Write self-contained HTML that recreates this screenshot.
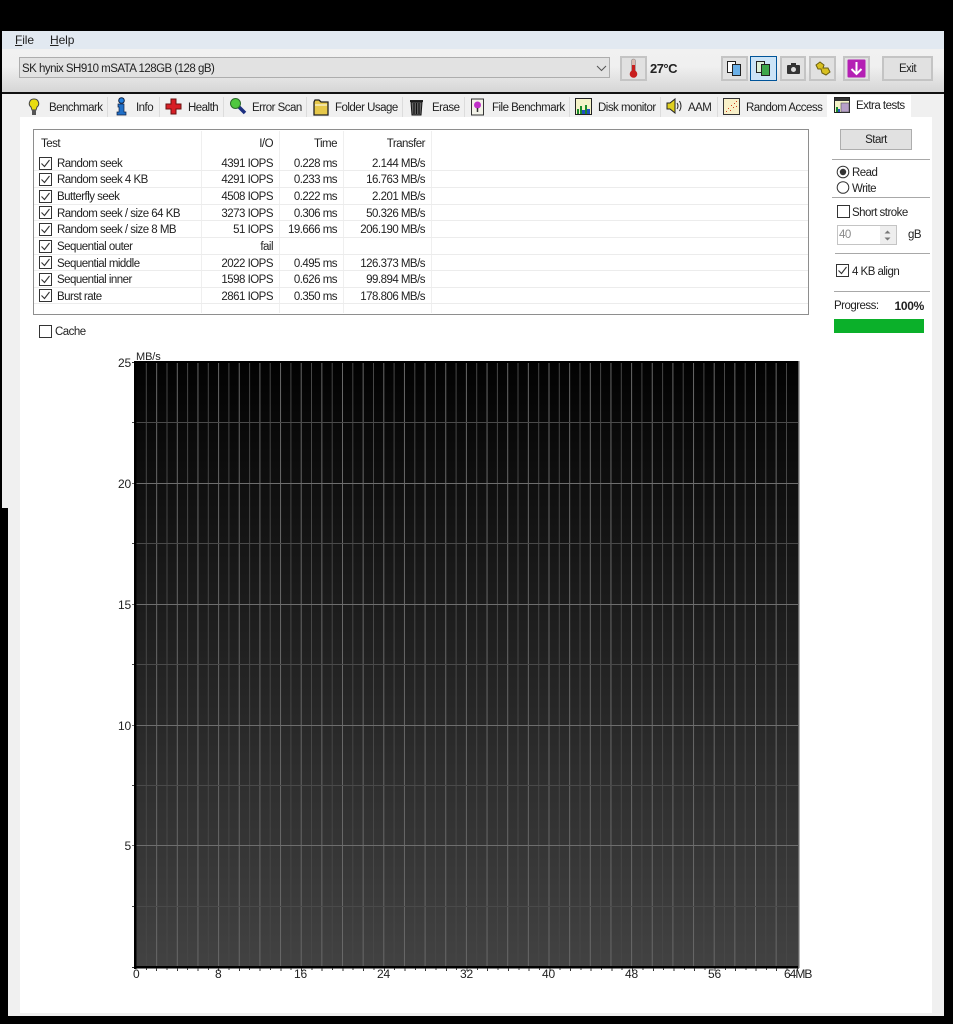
<!DOCTYPE html>
<html><head><meta charset="utf-8"><style>
html,body{margin:0;padding:0;background:#000;width:953px;height:1024px;overflow:hidden}
body{position:relative;font:11.5px "Liberation Sans",sans-serif;color:#222;letter-spacing:-.52px}
div,span,svg{position:absolute;white-space:nowrap}
.b{box-sizing:border-box;border:2px solid #c4c4c4;background:#e1e1e1}
.sep{height:1px;background:#a8a8a8}
.tab{top:101px;line-height:15px}
.tsep{top:97px;width:1px;height:20px;background:#dcdcdc}
.t{line-height:14px;margin-top:1px}
.r{text-align:right}
.h{height:1px;left:34px;width:774px;background:#ececec}
.v{width:1px;top:131px;height:182px;background:#efefef}
.l{font-size:12px;line-height:14px;letter-spacing:-.15px}
</style></head><body>
<svg width="0" height="0" style="position:absolute"><defs>
<g id="cb"><rect x=".5" y=".5" width="12" height="12" fill="#fff" stroke="#333"/><path d="M2.500 6.500l3 3 5-6.500" fill="none" stroke="#333" stroke-width="1.100"/></g>
<g id="cu"><rect x=".5" y=".5" width="12" height="12" fill="#fff" stroke="#333"/></g>
</defs></svg>

<!-- window -->
<div style="left:2px;top:31px;width:942px;height:18px;background:#e2e9f1"></div>
<div style="left:2px;top:49px;width:942px;height:43px;background:linear-gradient(#f1f1f1,#f0f0f0 40%,#d6d6d6)"></div>
<div style="left:2px;top:92px;width:942px;height:2px;background:#111"></div>
<div style="left:2px;top:94px;width:942px;height:414px;background:#f0f0f0"></div>
<div style="left:8px;top:508px;width:936px;height:508px;background:#f0f0f0"></div>
<div style="left:20px;top:117px;width:912px;height:896px;background:#fff"></div>

<!-- menu -->
<div class="t" style="left:15px;top:32px;font-size:12px;letter-spacing:-.1px"><u>F</u>ile</div>
<div class="t" style="left:50px;top:32px;font-size:12px;letter-spacing:-.1px"><u>H</u>elp</div>

<!-- toolbar -->
<div style="box-sizing:border-box;left:19px;top:57px;width:591px;height:21px;background:#e2e2e2;border:1px solid #adadad"></div>
<div class="t" style="left:22px;top:61px">SK hynix SH910 mSATA 128GB (128 gB)</div>
<svg style="left:596px;top:65px" width="11" height="7"><path d="M1 1l4.500 4.500L10 1" fill="none" stroke="#555"/></svg>

<div class="b" style="left:620px;top:56px;width:27px;height:25px"></div>
<svg style="left:627px;top:58px" width="14" height="21"><rect x="4.500" y="1" width="4" height="14" rx="2" fill="#d9b9b0" stroke="#888" stroke-width=".6"/><rect x="5" y="7" width="3" height="8" fill="#c81e1e"/><circle cx="6.500" cy="16" r="3.800" fill="#c81e1e"/></svg>
<div style="left:650px;top:62px;font-weight:bold;font-size:13px;line-height:14px;color:#222">27°C</div>

<div class="b" style="left:721px;top:56px;width:27px;height:25px"></div>
<svg style="left:726px;top:60px" width="17" height="17"><rect x="1.500" y="1.500" width="8" height="11" fill="#fff" stroke="#222"/><rect x="6.500" y="4.500" width="8" height="11" fill="#6ab0e8" stroke="#222"/></svg>
<div style="box-sizing:border-box;left:750px;top:56px;width:27px;height:25px;background:#cce4f7;border:1px solid #005499"></div>
<svg style="left:755px;top:60px" width="17" height="17"><rect x="1.500" y="1.500" width="8" height="11" fill="#dff0d8" stroke="#222"/><rect x="6.500" y="4.500" width="8" height="11" fill="#3da64a" stroke="#222"/></svg>
<div class="b" style="left:780px;top:56px;width:26px;height:25px"></div>
<svg style="left:786px;top:62px" width="15" height="13"><rect x="1" y="3" width="13" height="9" rx="1" fill="#333"/><rect x="5" y="1" width="5" height="3" fill="#333"/><circle cx="7.500" cy="7.500" r="2.500" fill="#ddd"/></svg>
<div class="b" style="left:809px;top:56px;width:27px;height:25px"></div>
<svg style="left:814px;top:60px" width="18" height="17"><path d="M2 5l4-3 4 3-1 3 5 0 2 4-4 3-4-2-1-4-3 0z" fill="#d8c020" stroke="#6a5e10"/></svg>
<div class="b" style="left:843px;top:56px;width:27px;height:25px"></div>
<svg style="left:847px;top:59px" width="19" height="19"><rect x=".5" y=".5" width="18" height="18" rx="1" fill="#b41fb4"/><path d="M9.500 3v12M4.500 10l5 5 5-5" fill="none" stroke="#fff" stroke-width="2"/></svg>
<div class="b" style="left:882px;top:56px;width:51px;height:25px"></div>
<div class="t" style="left:882px;top:61px;width:51px;text-align:center">Exit</div>

<!-- tabs -->
<div style="left:21px;top:97px;width:806px;height:20px;background:#f0f0f0"></div>
<div class="tsep" style="left:107px"></div><div class="tsep" style="left:159px"></div><div class="tsep" style="left:223px"></div><div class="tsep" style="left:306px"></div><div class="tsep" style="left:402px"></div><div class="tsep" style="left:464px"></div><div class="tsep" style="left:569px"></div><div class="tsep" style="left:660px"></div><div class="tsep" style="left:717px"></div>
<div style="left:827px;top:95px;width:84px;height:22px;background:#fff"></div>

<svg style="left:28px;top:98px" width="12" height="19"><path d="M6 1a4.500 4.500 0 0 0-3 8l1 3h4l1-3a4.500 4.500 0 0 0-3-8z" fill="#e8dc10" stroke="#444"/><rect x="4" y="12" width="4" height="5" fill="#555"/></svg>
<div class="tab" style="left:49px">Benchmark</div>
<svg style="left:115px;top:97px" width="13" height="20"><circle cx="6.500" cy="3.500" r="2.800" fill="#2080e0" stroke="#124"/><path d="M3 7h6v8h2v3H2v-3h2V10H3z" fill="#2070c8" stroke="#124" stroke-width=".7"/></svg>
<div class="tab" style="left:136px">Info</div>
<svg style="left:165px;top:98px" width="17" height="17"><path d="M6 1h5v5h5v5h-5v5H6v-5H1V6h5z" fill="#d81f26" stroke="#6a1010"/></svg>
<div class="tab" style="left:188px">Health</div>
<svg style="left:229px;top:97px" width="18" height="18"><path d="M9 9l7 7" stroke="#1c2f80" stroke-width="3.500"/><circle cx="6.500" cy="6.500" r="5" fill="#4fc83f" stroke="#2b6a2b"/></svg>
<div class="tab" style="left:252px">Error Scan</div>
<svg style="left:313px;top:99px" width="16" height="17"><path d="M1 3l1-2h4l2 2h7v13H1z" fill="#e6c84a" stroke="#222" stroke-width="1.300"/><path d="M2 6h12" stroke="#fff"/></svg>
<div class="tab" style="left:335px">Folder Usage</div>
<svg style="left:409px;top:98px" width="15" height="18"><path d="M1 2h13v2H1z" fill="#222"/><path d="M2 4h11l-1 13H3z" fill="#666" stroke="#111"/><path d="M5 5v11M7.500 5v11M10 5v11" stroke="#111" stroke-width="1.200"/></svg>
<div class="tab" style="left:432px">Erase</div>
<svg style="left:470px;top:98px" width="15" height="18"><path d="M1.500 1h12v16h-12z" fill="#f2f2e8" stroke="#333"/><circle cx="7.500" cy="7" r="3.500" fill="#c030c8"/><path d="M7.500 10v4" stroke="#333" stroke-width="1.500"/></svg>
<div class="tab" style="left:492px">File Benchmark</div>
<svg style="left:575px;top:98px" width="17" height="17"><rect x=".5" y=".5" width="16" height="16" fill="#f4f2c8" stroke="#222"/><path d="M2 16v-5h2v5zM5 16V8h2v8zM10 16v-9h2v9z" fill="#1a8a2a"/><path d="M7 16v-4h3v4zM12 16v-5h3v5z" fill="#2050c0"/></svg>
<div class="tab" style="left:598px">Disk monitor</div>
<svg style="left:666px;top:98px" width="17" height="16"><path d="M1 5h3l5-4v14l-5-4H1z" fill="#e0d020" stroke="#222"/><path d="M11 5q2 3 0 6M13.500 3q3 5 0 10" fill="none" stroke="#222"/></svg>
<div class="tab" style="left:688px">AAM</div>
<svg style="left:723px;top:98px" width="17" height="17"><rect x=".5" y=".5" width="16" height="16" fill="#f8f0c8" stroke="#333"/><path d="M3 13h1v1H3zM5 10h1v1H5zM7 12h1v1H7zM8 7h1v1H8zM10 9h1v1h-1zM11 5h1v1h-1zM13 8h1v1h-1zM13 3h1v1h-1z" fill="#d04020"/></svg>
<div class="tab" style="left:746px">Random Access</div>
<svg style="left:834px;top:97px" width="16" height="16"><rect x=".5" y=".5" width="15" height="15" fill="#f4f2c8" stroke="#222"/><rect x="1" y="1" width="14" height="3" fill="#333"/><path d="M2 15v-5h2v5z" fill="#1a8a2a"/><path d="M4 15v-3h2v3z" fill="#2050c0"/><rect x="7" y="6" width="8" height="9" fill="#b8a0c8" stroke="#555" stroke-width=".6"/></svg>
<div class="tab" style="left:856px;top:99px">Extra tests</div>

<!-- table -->
<div style="box-sizing:border-box;left:33px;top:129px;width:776px;height:186px;border:1px solid #8e8e8e;background:#fff"></div>
<div class="v" style="left:201px"></div><div class="v" style="left:279px"></div><div class="v" style="left:343px"></div><div class="v" style="left:431px"></div>
<div class="h" style="top:170px"></div><div class="h" style="top:187px"></div><div class="h" style="top:204px"></div><div class="h" style="top:220px"></div><div class="h" style="top:237px"></div><div class="h" style="top:254px"></div><div class="h" style="top:270px"></div><div class="h" style="top:287px"></div><div class="h" style="top:303px"></div>
<div class="t" style="left:41px;top:136px">Test</div>
<div class="t r" style="right:680px;top:136px">I/O</div>
<div class="t r" style="right:616px;top:136px">Time</div>
<div class="t r" style="right:528px;top:136px">Transfer</div>

<svg style="left:39px;top:157px" width="13" height="13"><use href="#cb"/></svg><div class="t" style="left:57px;top:156px">Random seek</div><div class="t r" style="right:680px;top:156px">4391 IOPS</div><div class="t r" style="right:616px;top:156px">0.228 ms</div><div class="t r" style="right:528px;top:156px">2.144 MB/s</div>
<svg style="left:39px;top:173px" width="13" height="13"><use href="#cb"/></svg><div class="t" style="left:57px;top:172px">Random seek 4 KB</div><div class="t r" style="right:680px;top:172px">4291 IOPS</div><div class="t r" style="right:616px;top:172px">0.233 ms</div><div class="t r" style="right:528px;top:172px">16.763 MB/s</div>
<svg style="left:39px;top:190px" width="13" height="13"><use href="#cb"/></svg><div class="t" style="left:57px;top:189px">Butterfly seek</div><div class="t r" style="right:680px;top:189px">4508 IOPS</div><div class="t r" style="right:616px;top:189px">0.222 ms</div><div class="t r" style="right:528px;top:189px">2.201 MB/s</div>
<svg style="left:39px;top:206px" width="13" height="13"><use href="#cb"/></svg><div class="t" style="left:57px;top:206px">Random seek / size 64 KB</div><div class="t r" style="right:680px;top:206px">3273 IOPS</div><div class="t r" style="right:616px;top:206px">0.306 ms</div><div class="t r" style="right:528px;top:206px">50.326 MB/s</div>
<svg style="left:39px;top:223px" width="13" height="13"><use href="#cb"/></svg><div class="t" style="left:57px;top:222px">Random seek / size 8 MB</div><div class="t r" style="right:680px;top:222px">51 IOPS</div><div class="t r" style="right:616px;top:222px">19.666 ms</div><div class="t r" style="right:528px;top:222px">206.190 MB/s</div>
<svg style="left:39px;top:240px" width="13" height="13"><use href="#cb"/></svg><div class="t" style="left:57px;top:239px">Sequential outer</div><div class="t r" style="right:680px;top:239px">fail</div>
<svg style="left:39px;top:256px" width="13" height="13"><use href="#cb"/></svg><div class="t" style="left:57px;top:256px">Sequential middle</div><div class="t r" style="right:680px;top:256px">2022 IOPS</div><div class="t r" style="right:616px;top:256px">0.495 ms</div><div class="t r" style="right:528px;top:256px">126.373 MB/s</div>
<svg style="left:39px;top:273px" width="13" height="13"><use href="#cb"/></svg><div class="t" style="left:57px;top:272px">Sequential inner</div><div class="t r" style="right:680px;top:272px">1598 IOPS</div><div class="t r" style="right:616px;top:272px">0.626 ms</div><div class="t r" style="right:528px;top:272px">99.894 MB/s</div>
<svg style="left:39px;top:289px" width="13" height="13"><use href="#cb"/></svg><div class="t" style="left:57px;top:289px">Burst rate</div><div class="t r" style="right:680px;top:289px">2861 IOPS</div><div class="t r" style="right:616px;top:289px">0.350 ms</div><div class="t r" style="right:528px;top:289px">178.806 MB/s</div>

<svg style="left:39px;top:325px" width="13" height="13"><use href="#cu"/></svg><div class="t" style="left:55px;top:324px">Cache</div>

<!-- right column -->
<div class="b" style="left:840px;top:129px;width:72px;height:21px;border-width:1px;border-color:#adadad"></div>
<div class="t" style="left:840px;top:132px;width:72px;text-align:center">Start</div>
<div class="sep" style="left:832px;top:159px;width:98px"></div>
<svg style="left:836px;top:165px" width="14" height="29"><circle cx="7" cy="7" r="5.800" fill="#fff" stroke="#333"/><circle cx="7" cy="7" r="3.200" fill="#333"/><circle cx="7" cy="22.500" r="5.800" fill="#fff" stroke="#333"/></svg>
<div class="t" style="left:852px;top:165px">Read</div>
<div class="t" style="left:852px;top:181px">Write</div>
<div class="sep" style="left:832px;top:197px;width:98px"></div>
<svg style="left:837px;top:205px" width="13" height="13"><use href="#cu"/></svg>
<div class="t" style="left:852px;top:205px">Short stroke</div>
<div style="box-sizing:border-box;left:837px;top:225px;width:60px;height:20px;background:#fff;border:1px solid #c4c4c4"></div>
<div style="left:880px;top:226px;width:16px;height:18px;background:#eee"></div>
<svg style="left:883px;top:229px" width="9" height="13"><path d="M1.500 4.500L4.500 1.500 7.500 4.500zM1.500 8.500L4.500 11.500 7.500 8.500z" fill="#777"/></svg>
<div class="t" style="left:839px;top:227px;color:#8a8a8a">40</div>
<div class="t" style="left:908px;top:227px">gB</div>
<div class="sep" style="left:835px;top:253px;width:95px"></div>
<svg style="left:836px;top:264px" width="13" height="13"><use href="#cb"/></svg>
<div class="t" style="left:852px;top:264px">4 KB align</div>
<div class="sep" style="left:834px;top:291px;width:96px"></div>
<div class="t" style="left:834px;top:298px">Progress:</div>
<div class="t" style="right:29px;top:298px;font-weight:bold;font-size:12px;letter-spacing:-.3px">100%</div>
<div style="left:834px;top:319px;width:90px;height:14px;background:#0bb02a"></div>

<!-- graph -->
<svg style="left:130px;top:355px" width="675px" height="620" viewBox="130 355 675 620">
<defs>
<linearGradient id="g" x1="0" y1="0" x2="0" y2="1"><stop offset="0" stop-color="#020202"/><stop offset="1" stop-color="#424242"/></linearGradient>
</defs>
<rect x="135" y="361" width="664" height="606" fill="url(#g)"/>
<path d="M146.300 363v603M167 363v603M187.600 363v603M208.300 363v603M228.900 363v603M249.600 363v603M270.200 363v603M290.900 363v603M311.500 363v603M332.200 363v603M352.800 363v603M373.500 363v603M394.100 363v603M414.800 363v603M435.400 363v603M456.100 363v603M476.700 363v603M497.400 363v603M518 363v603M538.700 363v603M559.300 363v603M580 363v603M600.600 363v603M621.300 363v603M641.900 363v603M662.600 363v603M683.200 363v603M703.900 363v603M724.500 363v603M745.200 363v603M765.800 363v603M786.500 363v603" stroke="#474747" fill="none"/>
<path d="M156.650 363v603M177.300 363v603M197.950 363v603M218.600 363v603M239.250 363v603M259.900 363v603M280.550 363v603M301.200 363v603M321.850 363v603M342.500 363v603M363.150 363v603M383.800 363v603M404.450 363v603M425.100 363v603M445.750 363v603M466.400 363v603M487.050 363v603M507.700 363v603M528.350 363v603M549 363v603M569.650 363v603M590.300 363v603M610.950 363v603M631.600 363v603M652.250 363v603M672.900 363v603M693.550 363v603M714.200 363v603M734.850 363v603M755.500 363v603M776.150 363v603" stroke="#686868" fill="none"/>
<path d="M132 422.500H798M132 543.500H798M132 664.500H798M132 785.500H798M132 906.500H798" stroke="#4a4a4a"/>
<path d="M132 483.500H798M132 604.500H798M132 725.500H798M132 845.500H798" stroke="#6e6e6e"/>
<path d="M132 362.500H136M132 967.500H136" stroke="#333"/>
<rect x="134" y="361" width="665" height="2" fill="#000"/>
<rect x="134" y="361" width="2.500" height="608" fill="#000"/>
<rect x="134" y="966" width="665" height="2.500" fill="#000"/>
<rect x="798" y="361" width="1.500" height="607" fill="#666"/>
<path d="M146.500 968v2M156.500 968v3M167 968v2M177.500 968v3M187.500 968v2M198 968v3M208.500 968v2M218.500 968v3M229 968v2M239.500 968v3M249.500 968v2M260 968v3M270.500 968v2M281 968v3M291 968v2M301.500 968v3M312 968v2M322 968v3M332.500 968v2M343 968v3M353 968v2M363.500 968v3M374 968v2M384.500 968v3M394.500 968v2M405 968v3M415.500 968v2M425.500 968v3M436 968v2M446.500 968v3M456.500 968v2M467 968v3M477.500 968v2M487.500 968v3M498 968v2M508.500 968v3M519 968v2M529 968v3M539.500 968v2M550 968v3M560 968v2M570.500 968v3M581 968v2M591 968v3M601.500 968v2M612 968v3M622 968v2M632.500 968v3M643 968v2M653.500 968v3M663.500 968v2M674 968v3M684.500 968v2M694.500 968v3M705 968v2M715 968v3M725.500 968v2M735.500 968v3M746 968v2M756 968v3M766.500 968v2M776.500 968v3M787 968v2M797.500 968v3" stroke="#333"/>
</svg>
<div class="t" style="left:136px;top:349px;font-size:11px;letter-spacing:-.1px">MB/s</div>
<div class="l r" style="right:822px;top:356px">25</div>
<div class="l r" style="right:822px;top:477px">20</div>
<div class="l r" style="right:822px;top:598px">15</div>
<div class="l r" style="right:822px;top:719px">10</div>
<div class="l r" style="right:822px;top:839px">5</div>
<div class="l" style="left:133px;top:967px">0</div>
<div class="l" style="left:215px;top:967px">8</div>
<div class="l" style="left:294px;top:967px">16</div>
<div class="l" style="left:377px;top:967px">24</div>
<div class="l" style="left:460px;top:967px">32</div>
<div class="l" style="left:542px;top:967px">40</div>
<div class="l" style="left:625px;top:967px">48</div>
<div class="l" style="left:708px;top:967px">56</div>
<div class="l" style="left:784px;top:967px;letter-spacing:-1px">64MB</div>
</body></html>
